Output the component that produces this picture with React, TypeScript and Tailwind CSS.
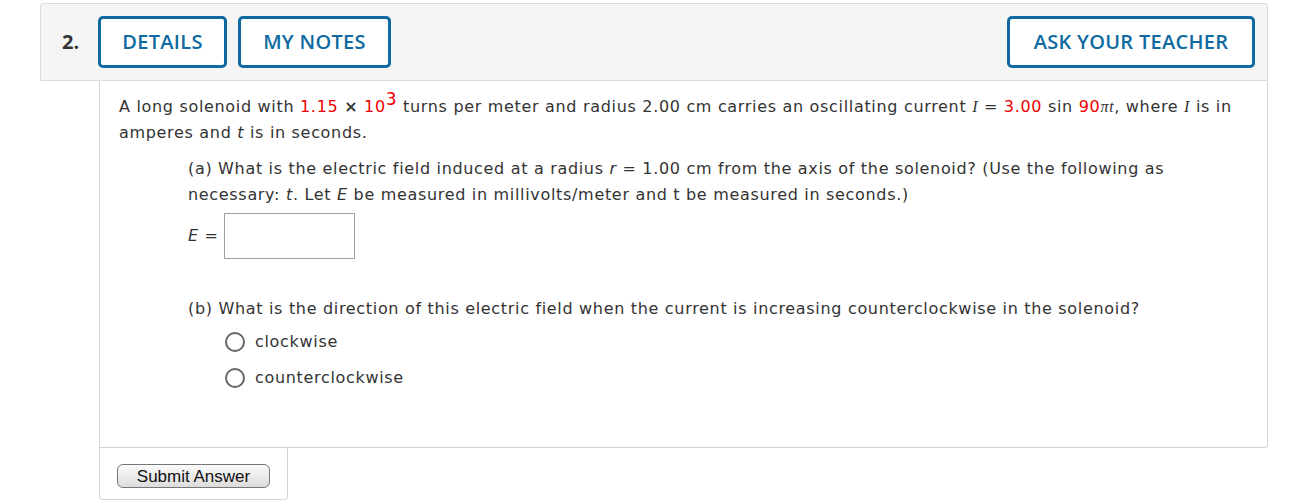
import React from "react"

const body = "font-['DejaVu_Sans',Verdana,sans-serif] tracking-[0.68px]"
const mathI = "font-['Liberation_Serif',serif] italic"

function HeaderButton({ label, className = "" }: { label: string; className?: string }) {
  return (
    <button
      className={`h-[52px] rounded-[5px] border-[3px] border-[#0e6aa0] bg-white text-[20px] font-semibold text-[#0e6aa0] font-['Open_Sans',sans-serif] tracking-[0.3px] ${className}`}
    >
      {label}
    </button>
  )
}

function Radio({ label }: { label: string }) {
  return (
    <label className="flex items-center gap-[10px] h-[36px]">
      <span className="w-[20px] h-[20px] rounded-full border-2 border-[#666] bg-white" />
      <span>{label}</span>
    </label>
  )
}

export default function App() {
  return (
    <div className={`bg-white min-h-[504px] pl-[40px] pr-[22px] pt-[3px] text-[16px] text-[#333] ${body}`}>
      {/* Question header */}
      <div className="h-[78px] rounded-t-[3px] border border-[#dcdcdc] bg-[#f5f5f5] flex items-center pl-[21px] pr-[12px] tracking-normal">
        <span className="w-[36px] text-[20px] font-bold text-[#333] font-['Open_Sans',sans-serif]">2.</span>
        <HeaderButton label="DETAILS" className="w-[129px]" />
        <HeaderButton label="MY NOTES" className="w-[153px] ml-[11px]" />
        <HeaderButton label="ASK YOUR TEACHER" className="w-[248px] ml-auto" />
      </div>

      {/* Question body */}
      <div className="ml-[59px] border-x border-b border-[#d4d4d4] rounded-br-[4px] h-[367px] pl-[19px] pr-[20px] pt-[13px] leading-[26px]">
        <p>
          A long solenoid with <span className="text-[#e00]">1.15</span> <b>×</b>{" "}
          <span className="text-[#e00]">
            10<span className="relative -top-[7px] text-[17px] leading-none">3</span>
          </span>{" "}
          turns per meter and radius 2.00 cm carries an oscillating current{" "}
          <span className={mathI}>I</span> = <span className="text-[#e00]">3.00</span> sin{" "}
          <span className="text-[#e00]">90</span>
          <span className={mathI}>πt</span>, where <span className={mathI}>I</span> is in amperes and{" "}
          <i>t</i> is in seconds.
        </p>

        <div className="pl-[69px] pt-[10px]">
          <p>
            (a) What is the electric field induced at a radius <i>r</i> = 1.00 cm from the axis of the
            solenoid? (Use the following as necessary: <i>t</i>. Let <i>E</i> be measured in
            millivolts/meter and t be measured in seconds.)
          </p>
          <div className="flex items-center mt-[5px]">
            <span className="w-[36px]">
              <i>E</i> =
            </span>
            <input className="w-[131px] h-[46px] border border-[#a0a0a0] bg-white" />
          </div>

          <p className="mt-[37px]">
            (b) What is the direction of this electric field when the current is increasing
            counterclockwise in the solenoid?
          </p>
          <div className="pl-[37px] mt-[2px]">
            <Radio label="clockwise" />
            <Radio label="counterclockwise" />
          </div>
        </div>
      </div>

      {/* Submit tab */}
      <div className="ml-[59px] w-[189px] h-[52px] border-x border-b border-[#d4d4d4] rounded-b-[4px] pl-[17px] pt-[16px] tracking-normal">
        <button className="w-[153px] h-[24px] rounded-[6px] border border-[#777] bg-gradient-to-b from-[#fbfbfb] to-[#dcdcdc] text-[17px] text-[#111] font-['Liberation_Sans',Arial,sans-serif] leading-none">
          Submit Answer
        </button>
      </div>
    </div>
  )
}
